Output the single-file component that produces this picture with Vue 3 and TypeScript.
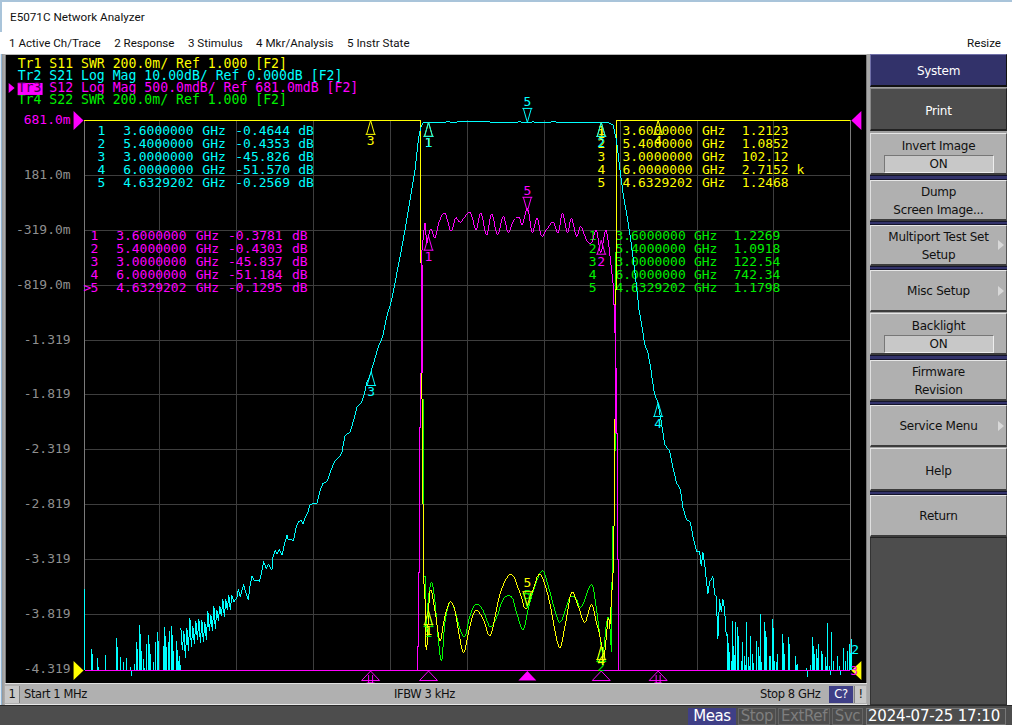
<script setup lang="ts">
type Pt = [number, number]

const hLines = Array.from({ length: 9 }, (_, i) => 175.5 + 55 * i)
const vLines = [159.5, 236.5, 313.5, 390.5, 467.5, 544.5, 620.5, 697.5, 774.5]

const axis = [
  { t: '681.0m', y: 124, active: true },
  { t: '181.0m', y: 179 },
  { t: '-319.0m', y: 234 },
  { t: '-819.0m', y: 289 },
  { t: '-1.319', y: 344 },
  { t: '-1.819', y: 399 },
  { t: '-2.319', y: 454 },
  { t: '-2.819', y: 509 },
  { t: '-3.319', y: 564 },
  { t: '-3.819', y: 619 },
  { t: '-4.319', y: 674 },
]

const header = [
  { t: 'Tr1 S11 SWR 200.0m/ Ref 1.000 [F2]', y: 68, c: 'ty' },
  { t: 'Tr2 S21 Log Mag 10.00dB/ Ref 0.000dB [F2]', y: 80, c: 'tc' },
  { t: '    S12 Log Mag 500.0mdB/ Ref 681.0mdB [F2]', y: 92, c: 'tm' },
  { t: 'Tr4 S22 SWR 200.0m/ Ref 1.000 [F2]', y: 104, c: 'tg' },
]

interface Table {
  c: string
  xs: number[]
  y0: number
  rows: string[][]
}
const tables: Table[] = [
  {
    c: 'tc', xs: [97, 122.7, 202, 235, 298], y0: 135,
    rows: [
      ['1', '3.6000000', 'GHz', '-0.4644', 'dB'],
      ['2', '5.4000000', 'GHz', '-0.4353', 'dB'],
      ['3', '3.0000000', 'GHz', '-45.826', 'dB'],
      ['4', '6.0000000', 'GHz', '-51.570', 'dB'],
      ['5', '4.6329202', 'GHz', '-0.2569', 'dB'],
    ],
  },
  {
    c: 'tm', xs: [90, 115.7, 195.3, 227.7, 291.7], y0: 240,
    rows: [
      ['1', '3.6000000', 'GHz', '-0.3781', 'dB'],
      ['2', '5.4000000', 'GHz', '-0.4303', 'dB'],
      ['3', '3.0000000', 'GHz', '-45.837', 'dB'],
      ['4', '6.0000000', 'GHz', '-51.184', 'dB'],
      ['5', '4.6329202', 'GHz', '-0.1295', 'dB'],
    ],
  },
  {
    c: 'ty', xs: [597.8, 622.7, 702.3, 742.3], y0: 135,
    rows: [
      ['1', '3.6000000', 'GHz', '1.2123'],
      ['2', '5.4000000', 'GHz', '1.0852'],
      ['3', '3.0000000', 'GHz', '102.12'],
      ['4', '6.0000000', 'GHz', '2.7152 k'],
      ['5', '4.6329202', 'GHz', '1.2468'],
    ],
  },
  {
    c: 'tg', xs: [589, 615.7, 694.3, 734], y0: 240,
    rows: [
      ['1', '3.6000000', 'GHz', '1.2269'],
      ['2', '5.4000000', 'GHz', '1.0918'],
      ['3', '3.0000000', 'GHz', '122.54'],
      ['4', '6.0000000', 'GHz', '742.34'],
      ['5', '4.6329202', 'GHz', '1.1798'],
    ],
  },
]

/* --- traces --- */
function smooth(p: Pt[], n = 5): Pt[] {
  const out: Pt[] = []
  for (let i = 0; i < p.length - 1; i++) {
    const a = p[Math.max(i - 1, 0)]
    const b = p[i]
    const c = p[i + 1]
    const d = p[Math.min(i + 2, p.length - 1)]
    for (let k = 0; k < n; k++) {
      const t = k / n
      const f = (u: number) =>
        0.5 * (2 * b[u] + (c[u] - a[u]) * t + (2 * a[u] - 5 * b[u] + 4 * c[u] - d[u]) * t * t + (3 * b[u] - a[u] - 3 * c[u] + d[u]) * t * t * t)
      out.push([f(0), f(1)])
    }
  }
  out.push(p[p.length - 1])
  return out
}
const str = (p: Pt[]) => p.map(q => q[0].toFixed(1) + ',' + q[1].toFixed(1)).join(' ')

let seed = 12345
const rnd = () => {
  seed = (seed * 1103515 + 12345) % 2147483648
  return seed / 2147483648
}
function lerp(tab: Pt[], x: number): number {
  for (let i = 0; i < tab.length - 1; i++) {
    if (x <= tab[i + 1][0]) {
      const t = (x - tab[i][0]) / (tab[i + 1][0] - tab[i][0])
      return tab[i][1] + (tab[i + 1][1] - tab[i][1]) * t
    }
  }
  return tab[tab.length - 1][1]
}

function barPath(list: Pt[], ox: number, oy: number): string {
  return list
    .map((b, i) => {
      const x = Math.round(ox + b[0] / 3) + 0.5
      const y = Math.round(oy + b[1] / 3)
      const second = i % 2 === 0 ? `M${x + 1} 671V${y + 9}` : ''
      return `M${x} 671V${y}${second}`
    })
    .join('')
}

const barsLeftZ: Pt[] = [[270,150],[273,165],[287,178],[312,168],[349,117],[360,175],[370,190],[378,177],[390,205],[402,195],[408,130],[412,150],[416,78],[422,155],[430,180],[437,135],[443,108],[450,165],[458,190],[465,130],[470,100],[488,140],[492,85],[497,145],[503,130],[508,95],[513,80],[520,155],[527,125],[533,185],[538,170]]
const barsLeft = barPath(barsLeftZ, 0, 600)

const barsRightZ: Pt[] = [[112,225],[118,280],[122,305],[127,185],[130,260],[136,188],[140,205],[145,250],[152,305],[157,250],[162,290],[168,190],[173,295],[180,230],[186,285],[198,245],[205,265],[211,165],[214,310],[217,310],[226,190],[231,235],[240,290],[244,290],[250,180],[255,305],[260,310],[265,285],[280,225],[285,285],[296,235],[300,255],[318,290],[325,315],[352,328],[364,318],[370,235],[375,285],[381,270],[386,255],[395,275],[400,285],[408,295],[415,193],[421,320],[427,220],[432,305],[445,290],[450,320],[462,268],[468,305],[473,275],[480,255],[485,240]]
const barsRight = barPath(barsRightZ, 690, 560)

const centerEnv: Pt[] = [[180,640],[200,630],[213,622],[222,611],[232,600]]
const ampEnv: Pt[] = [[180,22],[200,18],[213,16],[222,12],[232,9]]
const noise: Pt[] = []
for (let x = 180; x <= 232; x += 1.5) {
  const sgn = noise.length % 2 ? 1 : -1
  noise.push([x + 0.5, lerp(centerEnv, x) + sgn * lerp(ampEnv, x) * (0.25 + 0.75 * rnd())])
}

const leftSkirt: Pt[] = [[233.5,603],[236.7,598],[238,590],[240,598],[243.3,585],[245,592],[248.3,601],[249,590],[251.7,577],[254,581],[259.3,582],[262,570],[263.3,562],[266,570],[268,565],[271.7,571],[272.5,558],[275,551],[277,555],[279,550],[281.7,556],[284,546],[286.7,536],[288,540],[293.3,541],[296,528],[298.3,522],[301,521],[303,525],[305,518],[308,512],[310,505],[316.7,504],[320,491],[322.7,484],[327,482],[330,473],[334.3,462],[339,458],[341.7,453],[345,436],[350,433],[354,419],[356.7,408],[361,403],[363.3,398],[367,382],[371,372],[378.3,347],[382.7,337],[386.7,317],[391.7,300],[400,257],[405,230],[410,200],[415,170],[418.3,140],[420.7,128],[423.3,122.5],[445,122.5],[448,121.5],[452,122.5],[456,123],[458,121.5],[468,122],[484,121.5],[500,123],[520,122],[527,123],[533,122],[540,123],[552,122],[570,122.5],[590,122.5],[608,122.7],[613.3,125],[616.7,140],[620,168],[623.3,193],[626.7,213],[630,233],[635,270],[639.3,310],[641.7,323],[645,345],[648.3,353],[651.7,373],[655,395],[658.3,403],[661.7,423],[665,445],[670,452],[673.3,468],[676.7,483],[680.7,490],[683.3,508],[686.7,520],[690.7,523],[693.3,537],[697.3,553],[700,552],[701.7,567],[703.3,553],[705.3,567],[706.7,580],[708.3,595],[710,583],[713.3,577],[715,595],[716.7,597],[718.3,640],[720,600],[721.7,613],[723.3,600],[725,610],[726.7,637]]
const cyan = str([...noise, ...leftSkirt])

const z3 = (p: Pt): Pt => [400 + p[0] / 3, 90 + p[1] / 3]
const z4 = (p: Pt): Pt => [400 + p[0] / 3, 550 + p[1] / 3]

const magentaPass = smooth(([[70,440],[75,400],[80,460],[85,440],[93,418],[105,445],[118,395],[135,370],[153,425],[167,385],[182,397],[210,367],[228,420],[243,370],[260,437],[275,372],[293,435],[310,380],[325,428],[340,395],[357,382],[367,405],[383,355],[397,428],[412,385],[425,440],[440,420],[460,397],[475,430],[488,370],[503,430],[515,385],[530,440],[543,410],[560,450],[575,460],[590,420],[603,490],[618,420],[630,490]] as Pt[]).map(z3))
const magenta = str([
  [417.5, 671], [417.5, 647], [418.5, 647], [418.5, 573], [419.5, 573], [419.5, 428], [420.5, 428], [420.5, 373], [421.5, 373], [421.5, 265], [422, 250],
  ...magentaPass,
  [613.5, 285], [613.5, 305], [615.5, 305], [615.5, 368], [616.5, 368], [616.5, 434], [617.5, 434], [617.5, 560], [618.5, 560], [618.5, 671],
])
const magentaThick = 'M422.5 265V373M420.5 373V428M615.5 368V434M614.5 305V333'

const greenPass = smooth(([[75,295],[85,150],[95,100],[105,160],[115,270],[125,335],[135,220],[150,158],[165,185],[180,240],[195,262],[210,200],[228,165],[250,185],[270,233],[290,205],[310,150],[335,143],[350,190],[370,242],[390,160],[425,65],[445,110],[470,200],[485,215],[510,145],[530,150],[545,175],[575,105],[590,180],[605,295],[612,300],[620,225],[628,210],[635,310]] as Pt[]).map(z4))
const green = str([[421.5, 253], [421.5, 400], [423.5, 400], [423.5, 577], [425, 577], ...greenPass, [612, 595], [613, 553], [613, 527], [614.5, 527], [614.5, 452], [615.5, 452], [615.5, 252]])

const yellowPass = smooth(([[75,230],[80,300],[90,125],[105,185],[120,275],[133,210],[150,158],[165,185],[180,270],[192,310],[210,230],[228,183],[250,210],[272,258],[300,135],[333,75],[360,130],[378,180],[400,120],[420,75],[445,140],[477,293],[495,235],[515,130],[535,170],[555,220],[575,165],[590,220],[605,280],[612,335],[625,210],[630,240]] as Pt[]).map(z4))
const yellow = str([[83.5, 120.5], [420.5, 120.5], [420.5, 263], [421.5, 263], [421.5, 400], [422.5, 400], [422.5, 505], [423.5, 505], [423.5, 577], [425, 600], ...yellowPass, [613.5, 570], [613.5, 527], [614.5, 527], [614.5, 420], [615.5, 420], [615.5, 290], [616.5, 290], [616.5, 120.5], [851, 120.5]])

/* --- markers --- */
interface Marker { x: number; tip: number; dir: 1 | -1; c: string; label: string; ly: number }
const markers: Marker[] = [
  { x: 370.5, tip: 120.5, dir: 1, c: 'y', label: '3', ly: 145 },
  { x: 428.5, tip: 122.5, dir: 1, c: 'y', label: '1', ly: 147 },
  { x: 601.5, tip: 122.5, dir: 1, c: 'y', label: '1', ly: 138 },
  { x: 658.5, tip: 120.5, dir: 1, c: 'y', label: '4', ly: 145 },
  { x: 428.5, tip: 122.5, dir: 1, c: 'c', label: '1', ly: 147 },
  { x: 601.5, tip: 122.5, dir: 1, c: 'c', label: '2', ly: 147 },
  { x: 527.5, tip: 122.5, dir: -1, c: 'c', label: '5', ly: 106 },
  { x: 371, tip: 372, dir: 1, c: 'c', label: '3', ly: 397 },
  { x: 658.5, tip: 403, dir: 1, c: 'c', label: '4', ly: 429 },
  { x: 428.5, tip: 236.5, dir: 1, c: 'm', label: '1', ly: 261 },
  { x: 527.5, tip: 211.5, dir: -1, c: 'm', label: '5', ly: 195 },
  { x: 601.5, tip: 240.5, dir: 1, c: 'm', label: '2', ly: 266 },
  { x: 428.5, tip: 613.5, dir: 1, c: 'g', label: '1', ly: 638 },
  { x: 527.5, tip: 608.5, dir: -1, c: 'g', label: '5', ly: 600 },
  { x: 601.5, tip: 648.5, dir: 1, c: 'g', label: '2', ly: 672 },
  { x: 428.5, tip: 611.5, dir: 1, c: 'y', label: '1', ly: 636 },
  { x: 527.5, tip: 606.5, dir: -1, c: 'y', label: '5', ly: 588 },
  { x: 601.5, tip: 646.5, dir: 1, c: 'y', label: '4', ly: 666 },
]
const markerPath = (m: Marker) => {
  const h = 14 * m.dir
  const b = m.tip + h
  return `M${m.x} ${m.tip}L${m.x - 4} ${b}M${m.x} ${m.tip}L${m.x + 4} ${b}M${m.x - 5} ${b}H${m.x + 5}`
}

const bottomMarks = [
  { x: 370.5, solid: false, inner: true },
  { x: 428.5, solid: false, inner: false },
  { x: 527.5, solid: true, inner: false },
  { x: 601.5, solid: false, inner: false },
  { x: 658.5, solid: false, inner: true },
]
const triPts = (x: number) => `${x},672 ${x - 9},681.5 ${x + 9},681.5`

/* --- softkeys --- */
interface Key {
  lines: string[]
  cls: string
  toggle?: string
  arrow?: boolean
  sep?: string
}
const keys: Key[] = [
  { lines: ['System'], cls: 'head h33' },
  { lines: ['Print'], cls: 'dark h43 mt1' },
  { lines: ['Invert Image'], cls: 'h42 mt2 tog', toggle: 'ON', sep: 's5' },
  { lines: ['Dump', 'Screen Image...'], cls: 'h41', sep: 's4' },
  { lines: ['Multiport Test Set', 'Setup'], cls: 'h41', arrow: true, sep: 's4' },
  { lines: ['Misc Setup'], cls: 'h42', arrow: true },
  { lines: ['Backlight'], cls: 'h42 mt1 tog', toggle: 'ON', sep: 's5' },
  { lines: ['Firmware', 'Revision'], cls: 'h41', sep: 's4' },
  { lines: ['Service Menu'], cls: 'h42', arrow: true },
  { lines: ['Help'], cls: 'h43 mt1', sep: 's4' },
  { lines: ['Return'], cls: 'h42' },
]

const menu = ['1 Active Ch/Trace', '2 Response', '3 Stimulus', '4 Mkr/Analysis', '5 Instr State']
</script>

<template>
  <div class="win">
    <div class="title">E5071C Network Analyzer</div>
    <div class="menu">
      <div class="menu-items">
        <span v-for="m in menu" :key="m">{{ m }}</span>
      </div>
      <span>Resize</span>
    </div>

    <div class="middle">
      <div class="edge"></div>
      <div class="left">
        <svg class="chart" width="862" height="630" viewBox="5 55 862 630">
          <rect x="5" y="55" width="862" height="630" fill="#000" />
          <g class="grid">
            <line v-for="y in hLines" :key="'h' + y" x1="83" :y1="y" x2="852" :y2="y" />
            <line v-for="x in vLines" :key="'v' + x" :x1="x" y1="120" :x2="x" y2="671" />
          </g>
          <line class="frame" x1="83.5" y1="120" x2="83.5" y2="671" />
          <line class="frame" x1="851.5" y1="120" x2="851.5" y2="671" />

          <text v-for="a in axis" :key="a.t" class="mono" :class="a.active ? 'tm' : 'ta'" x="70" :y="a.y" text-anchor="end">{{ a.t }}</text>

          <text v-for="h in header" :key="h.y" class="mono hd" :class="h.c" x="17" :y="h.y" xml:space="preserve">{{ h.t }}</text>
          <polygon points="8,83 14,88 8,93" fill="#ff00ff" />
          <rect x="17" y="83" width="25" height="12" fill="#ff00ff" />
          <text class="mono hd" x="17" y="92" fill="#40004a">Tr3</text>

          <template v-for="t in tables" :key="t.c">
            <template v-for="(r, ri) in t.rows" :key="ri">
              <text v-for="(cell, ci) in r" :key="ci" class="mono" :class="t.c" :x="t.xs[ci]" :y="t.y0 + ri * 13">{{ cell }}</text>
            </template>
          </template>
          <text class="mono tm" x="83" y="292">&gt;</text>

          <g class="traces">
            <polyline class="s-g" :points="green" />
            <polyline class="s-y" :points="yellow" />
            <polyline class="s-m" :points="magenta" />
            <path class="s-m" :d="magentaThick" />
            <polyline class="s-c" :points="cyan" />
            <path class="s-c" :d="barsLeft" />
            <path class="s-c" :d="barsRight" />
            <line class="s-c" x1="83.5" y1="590" x2="83.5" y2="671" />
            <line class="s-m" x1="84" y1="671.5" x2="851" y2="671.5" />
          </g>

          <g v-for="(m, i) in markers" :key="i">
            <path :class="'s-' + m.c" fill="none" :d="markerPath(m)" />
            <text class="mono" :class="'t' + m.c" :x="m.x" :y="m.ly" text-anchor="middle">{{ m.label }}</text>
          </g>

          <polygon points="73,111 83,120.5 73,130" fill="#ff00ff" />
          <polygon points="862,111 852,120.5 862,130" fill="#ff00ff" />
          <polygon points="73,662 83,671.5 73,681" fill="#ffff00" />
          <polygon points="862,662 852,671.5 862,681" fill="#ffff00" />
          <text class="mono tc" x="852" y="655">2</text>
          <text class="mono tm" x="851" y="676">3</text>

          <g v-for="b in bottomMarks" :key="b.x">
            <polygon :points="triPts(b.x)" :class="b.solid ? 'f-m' : 's-m'" :fill="b.solid ? '#ff00ff' : 'none'" />
            <path v-if="b.inner" class="s-m" :d="`M${b.x - 2} 676V684H${b.x + 2}V676M${b.x - 4} 684H${b.x + 4}`" />
          </g>
        </svg>

        <div class="status">
          <div class="ch">1</div>
          <span class="st-start">Start 1 MHz</span>
          <span class="st-ifbw">IFBW 3 kHz</span>
          <span class="st-stop">Stop 8 GHz</span>
          <div class="cq">C?</div>
          <div class="ex">!</div>
        </div>
      </div>
      <div class="gutter"></div>

      <div class="panel">
        <template v-for="k in keys" :key="k.lines[0]">
          <div class="key" :class="k.cls">
            <span v-for="l in k.lines" :key="l" class="ln">{{ l }}</span>
            <span v-if="k.toggle" class="toggle">{{ k.toggle }}</span>
            <i v-if="k.arrow" class="arrow"></i>
          </div>
          <div v-if="k.sep" class="sep" :class="k.sep"></div>
        </template>
        <div class="rest"></div>
      </div>
      <div class="side"></div>
    </div>

    <div class="bottom">
      <span class="flag meas">Meas</span>
      <span class="flag w-stop">Stop</span>
      <span class="flag w-ext">ExtRef</span>
      <span class="flag w-svc">Svc</span>
      <span class="clock">2024-07-25 17:10</span>
    </div>
  </div>
</template>

<style scoped>
.win {
  width: 1012px;
  height: 725px;
  overflow: hidden;
  background: #fff;
  border-top: 2px solid #a9c4da;
  box-sizing: border-box;
  display: flex;
  flex-direction: column;
  font-family: Roboto, "Open Sans", sans-serif;
  color: #111;
}
.title {
  height: 30px;
  padding-left: 8px;
  font-size: 11.7px;
  line-height: 30px;
  border-left: 2px solid #a9c4da;
}
.menu {
  height: 22px;
  display: flex;
  justify-content: space-between;
  padding: 0 11px 0 9px;
  font-size: 11.6px;
  line-height: 22px;
}
.menu-items {
  display: flex;
  gap: 13.5px;
}
.middle {
  height: 651px;
  display: flex;
}
.edge {
  width: 5px;
  background: linear-gradient(90deg, #dfe9f2 0, #dfe9f2 20%, #8fb4d4 20%, #8fb4d4 50%, #9a9a9a 50%, #b0b0b0 100%);
}
.left {
  width: 862px;
  padding-top: 1px;
  background: #b8b8b8;
  box-sizing: border-box;
  display: flex;
  flex-direction: column;
}
.chart {
  display: block;
}
.grid line {
  stroke: #3e3e3e;
  stroke-width: 1;
  shape-rendering: crispEdges;
}
.frame {
  stroke: #7a7a7a;
  stroke-width: 1;
  shape-rendering: crispEdges;
}
.mono {
  font-family: "DejaVu Sans Mono", monospace;
  font-size: 13px;
}
.hd {
  font-size: 13.2px;
  white-space: pre;
}
.ta { fill: #8f8f8f; }
.tc { fill: #00ffff; }
.tm { fill: #ff00ff; }
.ty { fill: #ffff00; }
.tg { fill: #00f000; }
.traces polyline,
.traces path,
.traces line {
  fill: none;
  stroke-width: 1;
  shape-rendering: crispEdges;
}
.s-c { stroke: #00ffff; stroke-width: 1; }
.s-m { stroke: #ff00ff; stroke-width: 1; fill: none; }
.s-y { stroke: #ffff00; stroke-width: 1; }
.s-g { stroke: #00ff00; stroke-width: 1; }
.f-m { stroke: none; }

.status {
  height: 20px;
  display: flex;
  align-items: center;
  border-top: 1px solid #e0e0e0;
  border-bottom: 1px solid #e8e8e8;
  box-sizing: content-box;
  margin-top: -1px;
  background: #b0b0b0;
  font-family: "DejaVu Sans", sans-serif;
  font-size: 11.5px;
  letter-spacing: -0.4px;
}
.ch {
  width: 14px;
  height: 17px;
  line-height: 17px;
  text-align: center;
  background: #c8c8c8;
  border-right: 1px solid #808080;
  margin-right: 4px;
}
.st-start { width: 370px; }
.st-ifbw { width: 366px; }
.st-stop { width: 69px; }
.cq {
  width: 24px;
  height: 17px;
  line-height: 17px;
  text-align: center;
  background: #3f3f87;
  color: #fff;
}
.ex {
  width: 11px;
  height: 17px;
  line-height: 17px;
  text-align: center;
  background: #c8c8c8;
  margin-left: 1px;
  border-left: 1px solid #808080;
}
.gutter {
  width: 3px;
  background: #a8a8a8;
}
.panel {
  width: 137px;
  display: flex;
  flex-direction: column;
  background: #a0a0a0;
  font-family: "DejaVu Sans", sans-serif;
  font-size: 12px;
  letter-spacing: -0.25px;
}
.side {
  flex: 1;
  background: #fff;
}
.key {
  position: relative;
  box-sizing: border-box;
  display: flex;
  flex-direction: column;
  align-items: center;
  justify-content: center;
  background: #b0b0b0;
  border-top: 1px solid #e6e6e6;
  border-left: 1px solid #e0e0e0;
  border-right: 1px solid #555;
  border-bottom: 2px solid #3c3c3c;
  color: #111;
}
.ln {
  line-height: 18px;
}
.h33 { height: 33px; padding-top: 2px; }
.h41 { height: 41px; padding-top: 2px; }
.h42 { height: 42px; }
.h43 { height: 43px; padding-top: 3px; }
.mt1 { margin-top: 1px; }
.mt2 { margin-top: 2px; }
.head {
  background: #32326a;
  color: #fff;
  border-top-color: #7070a8;
  border-left-color: #7070a8;
  border-right-color: #111;
  border-bottom-color: #111;
}
.dark {
  background: #4d4d4d;
  color: #fff;
  border-top-color: #888;
  border-left-color: #888;
  border-right-color: #222;
  border-bottom-color: #222;
}
.tog {
  justify-content: flex-start;
  padding-top: 3px;
}
.toggle {
  width: 110px;
  height: 18px;
  line-height: 16px;
  text-align: center;
  box-sizing: border-box;
  background: #c8c8c8;
  border: 1px solid;
  border-color: #777 #eee #eee #777;
}
.arrow {
  position: absolute;
  right: 2px;
  top: 50%;
  margin-top: -5px;
  width: 0;
  height: 0;
  border-left: 6px solid #d8d8d8;
  border-top: 5px solid transparent;
  border-bottom: 5px solid transparent;
}
.sep {
  box-sizing: border-box;
  background: #33336b;
  border-top: 1px solid #15152a;
  border-bottom: 1px solid #15152a;
}
.s4 { height: 4px; }
.s5 { height: 5px; }
.rest {
  flex: 1;
  background: #4d4d4d;
  border: 1px solid #333;
  border-top-color: #222;
}
.bottom {
  flex: 1;
  display: flex;
  align-items: stretch;
  box-sizing: border-box;
  padding: 2px 0 0 688px;
  background: #4d4d4d;
  gap: 2px;
  font-family: "DejaVu Sans", sans-serif;
  font-size: 15px;
  letter-spacing: -0.4px;
  border-top: 1px solid #2a2a2a;
}
.flag {
  text-align: center;
  line-height: 15px;
  color: #7e7e7e;
  box-sizing: border-box;
  border: 1px solid #666;
}
.meas {
  width: 48px;
  background: #3f3f87;
  color: #fff;
  border-color: #3f3f87;
}
.w-stop { width: 38px; }
.w-ext { width: 52px; }
.w-svc { width: 31px; }
.clock {
  width: 140px;
  margin-left: 1px;
  padding-right: 4px;
  text-align: center;
  line-height: 15px;
  color: #fff;
  box-sizing: border-box;
  border: 1px solid #777;
  letter-spacing: -0.2px;
}
</style>

<style>
html, body {
  margin: 0;
  background: #fff;
}
</style>
